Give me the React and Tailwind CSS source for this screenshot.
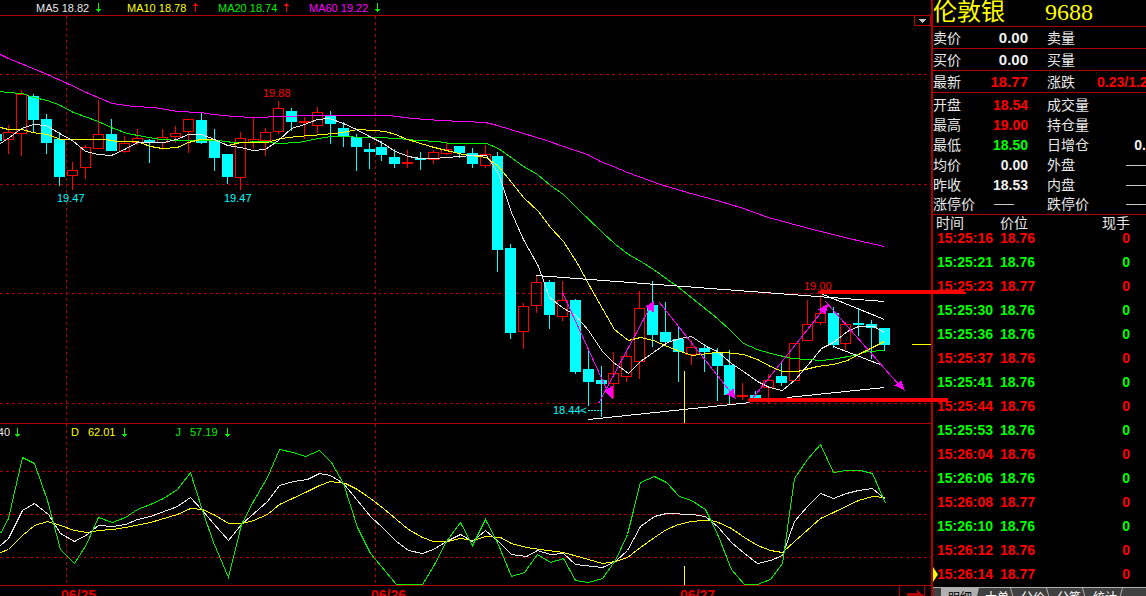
import React from "react";

const CHART_FONT = "font-['Liberation_Sans',sans-serif]";

// [center x, high, body top, body bottom, low, rising]
const CANDLES = [
  [-4, 134, 134, 141, 141, 0],
  [8, 125, 132, 139, 154, 1],
  [21, 90, 94, 133, 156, 1],
  [33, 94, 96, 120, 132, 0],
  [46, 114, 119, 143, 154, 0],
  [59, 132, 139, 177, 186, 0],
  [72, 162, 170, 175, 190, 1],
  [85, 145, 147, 167, 179, 1],
  [98, 100, 134, 148, 148, 1],
  [111, 119, 134, 151, 151, 0],
  [124, 136, 143, 151, 153, 1],
  [137, 129, 138, 142, 145, 1],
  [149, 139, 140, 143, 163, 0],
  [162, 129, 137, 142, 150, 1],
  [175, 126, 133, 136, 143, 1],
  [188, 119, 119, 131, 153, 1],
  [201, 113, 120, 143, 144, 0],
  [214, 129, 141, 158, 171, 0],
  [227, 154, 154, 177, 184, 0],
  [240, 132, 138, 177, 190, 1],
  [253, 117, 139, 142, 149, 1],
  [265, 128, 132, 140, 156, 1],
  [278, 101, 108, 131, 134, 1],
  [291, 108, 111, 122, 131, 0],
  [304, 117, 121, 122, 139, 1],
  [317, 107, 112, 125, 133, 1],
  [330, 111, 115, 124, 144, 0],
  [343, 122, 128, 137, 147, 0],
  [356, 134, 137, 147, 171, 0],
  [369, 143, 149, 152, 169, 0],
  [381, 141, 147, 155, 161, 0],
  [394, 149, 157, 164, 168, 0],
  [407, 150, 162, 163, 168, 1],
  [420, 152, 158, 160, 170, 0],
  [433, 150, 152, 159, 164, 1],
  [446, 143, 149, 153, 155, 1],
  [459, 146, 146, 153, 158, 0],
  [472, 148, 153, 164, 168, 0],
  [485, 145, 154, 165, 168, 1],
  [497, 152, 156, 250, 272, 0],
  [510, 244, 248, 333, 339, 0],
  [523, 303, 306, 331, 349, 1],
  [536, 276, 282, 305, 313, 1],
  [549, 280, 282, 315, 329, 0],
  [562, 281, 300, 316, 321, 1],
  [575, 299, 300, 372, 374, 0],
  [588, 349, 369, 382, 406, 0],
  [601, 366, 380, 384, 417, 0],
  [613, 352, 373, 383, 398, 1],
  [626, 350, 356, 376, 382, 1],
  [639, 291, 308, 361, 379, 1],
  [652, 281, 305, 335, 347, 0],
  [665, 302, 332, 342, 346, 0],
  [678, 326, 339, 352, 382, 0],
  [691, 340, 347, 354, 365, 1],
  [704, 344, 348, 352, 372, 0],
  [717, 348, 352, 366, 401, 0],
  [729, 350, 365, 395, 404, 0],
  [742, 383, 395, 396, 400, 1],
  [755, 391, 395, 398, 400, 0],
  [768, 374, 380, 387, 403, 1],
  [781, 361, 376, 383, 386, 0],
  [794, 343, 343, 380, 380, 1],
  [807, 300, 324, 340, 340, 1],
  [820, 295, 313, 322, 325, 1],
  [833, 307, 313, 345, 348, 0],
  [845, 322, 324, 343, 350, 1],
  [858, 308, 323, 325, 336, 0],
  [871, 320, 324, 328, 359, 0],
  [884, 328, 328, 345, 351, 0],
];

const MA5 =
  "0,143 9,137 21,128 33,124 46,125 59,133 72,140 85,151 98,154 111,155 124,149 137,142 150,142 163,142 176,139 188,134 201,134 214,139 227,145 240,147 253,150 265,149 278,140 291,128 304,124 317,119 329,118 343,123 356,129 369,136 381,142 395,151 408,156 420,158 433,158 446,157 459,156 472,155 486,155 498,173 511,212 523,239 538,266 549,297 562,307 575,315 588,330 602,351 613,362 628,373 640,361 653,352 667,342 680,338 691,336 706,346 717,351 731,363 743,371 757,381 769,387 782,390 795,379 808,364 821,348 833,342 847,331 858,326 873,326 884,332";
const MA10 =
  "0,127 8,129 22,129 32,132 47,134 60,139 105,139 117,141 137,141 150,146 162,148 177,147 188,142 200,139 213,139 228,145 240,142 267,142 280,138 297,136 323,134 342,132 357,129 373,130 385,131 395,134 407,139 430,146 450,151 463,154 486,157 498,166 512,183 523,197 538,211 550,227 563,241 577,263 590,287 602,308 614,329 628,340 640,337 653,340 667,346 680,351 692,355 700,354 715,352 725,352 743,354 757,359 770,366 782,371 797,371 817,366 833,364 847,360 860,353 884,341";
const MA20 =
  "0,91 7,92 22,93 33,97 47,100 60,105 73,112 87,117 100,122 113,128 127,133 143,136 160,139 180,140 217,140 233,142 267,141 277,143 298,142 313,139 330,136 377,137 397,138 417,140 437,141 450,143 470,143 486,143 498,148 512,158 523,166 537,174 550,185 563,194 577,208 602,232 615,244 628,254 642,262 653,269 667,279 677,286 692,298 717,318 730,330 743,343 757,349 770,353 792,358 807,359 822,360 837,358 853,355 867,351 884,350";
const MA60 =
  "0,54 8,58 35,69 47,74 67,83 88,93 112,103 133,106 153,107 177,111 200,112 213,114 233,116 253,117 283,116 310,115 362,115 388,115 413,118 440,120 463,121 485,122 497,125 510,129 546,140 563,146 587,154 600,161 613,166 627,172 660,184 687,192 720,201 740,207 768,217 790,223 820,231 857,240 884,246";

const K_LINE =
  "0,545 8,538 22,510 34,503 48,514 60,533 74,541 87,534 98,525 112,526 125,524 137,519 150,516 177,506 190,497 202,510 213,523 228,540 241,524 267,501 279,485 293,481 307,479 319,473 330,475 343,483 357,500 370,516 383,528 396,541 408,550 422,553 433,549 446,541 460,534 472,541 485,530 498,541 511,554 526,556 537,550 550,554 563,553 575,564 602,567 615,561 627,550 640,526 654,516 666,513 692,514 705,516 718,527 731,542 744,553 757,563 770,560 782,555 794,521 807,506 820,493 833,498 846,493 858,490 872,488 885,499";
const D_LINE =
  "0,552 8,549 22,535 34,525 47,521 60,525 74,530 87,532 98,530 112,529 125,527 150,522 177,514 190,508 202,509 215,515 228,523 242,523 253,520 267,514 279,504 305,492 319,485 330,481 345,483 357,489 370,498 383,508 396,519 408,529 422,537 433,541 447,541 460,538 473,540 485,536 500,537 511,543 526,547 540,549 563,552 588,559 602,563 615,561 627,557 640,547 654,537 666,529 678,524 691,521 703,520 711,520 718,522 731,528 744,537 757,545 770,550 782,552 794,541 820,518 833,512 858,500 872,496 885,497";
const J_LINE =
  "0,533 8,518 22,457 34,463 47,500 60,549 74,563 86,544 98,517 112,522 125,517 137,509 150,504 163,498 177,489 190,472 202,510 213,542 228,577 241,524 253,501 267,477 279,449 293,452 305,456 319,450 331,462 343,483 357,527 370,553 396,584 422,584 433,566 446,541 460,522 472,545 485,519 497,542 511,576 524,572 537,554 550,562 563,558 575,580 588,582 602,578 615,560 627,534 640,482 654,476 666,482 679,496 691,500 705,509 711,521 718,536 731,569 744,584 757,584 770,579 782,563 794,478 807,459 820,444 833,472 846,470 860,470 872,473 885,503";

const AVERAGES = [
  { text: "MA5 18.82", color: "text-[#e8e8e8]", up: false },
  { text: "MA10 18.78", color: "text-[#ffff00]", up: true },
  { text: "MA20 18.74", color: "text-[#00f000]", up: true },
  { text: "MA60 19.22", color: "text-[#ff00ff]", up: false },
];

const WHITE = "text-[#f0f0f0]";
const RED = "text-[#ff0000]";
const GREEN = "text-[#00ff00]";

const QUOTES = [
  ["卖价", "0.00", WHITE, "卖量", "", WHITE],
  ["买价", "0.00", WHITE, "买量", "", WHITE],
  ["最新", "18.77", RED, "涨跌", "0.23/1.2", RED],
];

const EMPTY = "——";

const DETAILS = [
  ["开盘", "18.54", RED, "成交量", ""],
  ["最高", "19.00", RED, "持仓量", ""],
  ["最低", "18.50", GREEN, "日增仓", "0."],
  ["均价", "0.00", WHITE, "外盘", EMPTY],
  ["昨收", "18.53", WHITE, "内盘", EMPTY],
  ["涨停价", EMPTY, WHITE, "跌停价", EMPTY],
];

const TICKS = [
  ["15:25:16", "18.76", RED],
  ["15:25:21", "18.76", GREEN],
  ["15:25:23", "18.77", RED],
  ["15:25:30", "18.76", GREEN],
  ["15:25:36", "18.76", GREEN],
  ["15:25:37", "18.76", RED],
  ["15:25:41", "18.76", GREEN],
  ["15:25:44", "18.76", RED],
  ["15:25:53", "18.76", GREEN],
  ["15:26:04", "18.76", RED],
  ["15:26:06", "18.76", GREEN],
  ["15:26:08", "18.77", RED],
  ["15:26:10", "18.76", GREEN],
  ["15:26:12", "18.76", RED],
  ["15:26:14", "18.77", RED],
];

const TABS = ["明细", "大单", "分价", "分笔", "统计"];

function Arrow({ up }) {
  return (
    <svg
      className={up ? "text-[#ff0000]" : "text-[#00f000]"}
      width="5"
      height="9"
      viewBox="0 0 5 9"
      fill="currentColor"
      shapeRendering="crispEdges"
      aria-hidden="true"
    >
      {up ? (
        <path d="M2 0h1v1h1v1h1v1h-2v6h-1v-6h-2v-1h1v-1h1z" />
      ) : (
        <path d="M2 0h1v6h2v1h-1v1h-1v1h-1v-1h-1v-1h-1v-1h2z" />
      )}
    </svg>
  );
}

function Curve({ points, color }) {
  return <polyline points={points} fill="none" stroke={color} />;
}

function Candle({ x, high, top, bottom, low, rising }) {
  if (!rising) {
    return (
      <g fill="#00ffff">
        <rect x={x} y={high} width="1" height={low - high} />
        <rect x={x - 5} y={top} width="11" height={bottom - top} />
      </g>
    );
  }
  return (
    <g fill="#ff0000">
      <rect x={x} y={high} width="1" height={top - high} />
      <rect x={x} y={bottom} width="1" height={low - bottom} />
      <path
        d={`M${x - 4.5} ${top + 0.5}h10v${bottom - top}h-10z`}
        fill="none"
        stroke="#ff0000"
      />
    </g>
  );
}

function PriceChart() {
  return (
    <svg
      className="relative z-10 block w-full overflow-visible"
      viewBox="0 16 931 407"
      shapeRendering="crispEdges"
      role="img"
      aria-label="K线图"
    >
      <g stroke="#b00000" strokeDasharray="3 3">
        {[74, 184, 293, 403].map((y) => (
          <path key={y} d={`M0 ${y + 0.5}H931`} />
        ))}
        {[66, 375].map((x) => (
          <path key={x} d={`M${x + 0.5} 16V423`} />
        ))}
      </g>
      {CANDLES.map(([x, high, top, bottom, low, rising]) => (
        <Candle key={x} x={x} high={high} top={top} bottom={bottom} low={low} rising={rising} />
      ))}
      <g transform="translate(0.5 0.5)">
        <Curve points={MA60} color="#ff00ff" />
        <Curve points={MA20} color="#00f000" />
        <Curve points={MA10} color="#ffff00" />
        <Curve points={MA5} color="#e8e8e8" />
        <path
          d="M536 275L884 301M588 419L750 402M787 397L884 387M820 293L884 319M833 346L882 365"
          stroke="#ffffff"
        />
        <path
          d="M562 292L608 393M598 403L650 306M659 302L732 394M748 403L823 309M825 301L899 385"
          stroke="#ff00ff"
        />
        <path
          d="M604 391L612 385V398ZM654 300L645 306L653 312ZM735 398L726 394L733 388ZM828 303L818 309L825 314ZM904 390L894 385L901 380Z"
          fill="#ff00ff"
        />
      </g>
      <path d="M684.5 371V423M912 344.5H931" stroke="#ffff00" />
      <path d="M588 410.5H601" stroke="#00ffff" strokeDasharray="2 1" />
      <path
        d="M818 291h2v-1h144v2h2v2h-146v-1h-2zM748 399h1v-1h199v3h-1v1h-198v-1h-1z"
        fill="#ff0000"
      />
      <g className={`${CHART_FONT} text-[11px]`} fill="#00ffff">
        <text x="57" y="202">19.47</text>
        <text x="224" y="202">19.47</text>
        <text x="553" y="414">18.44&lt;</text>
        <text x="263" y="97" fill="#ff0000">19.88</text>
        <text x="804" y="290" fill="#ff0000">19.00</text>
      </g>
    </svg>
  );
}

function OscillatorChart() {
  return (
    <svg
      className="block w-full"
      viewBox="0 424 931 161"
      shapeRendering="crispEdges"
      role="img"
      aria-label="KDJ"
    >
      <g stroke="#b00000" strokeDasharray="3 3">
        {[471, 514, 557].map((y) => (
          <path key={y} d={`M0 ${y + 0.5}H931`} />
        ))}
        {[66, 375].map((x) => (
          <path key={x} d={`M${x + 0.5} 424V583`} />
        ))}
      </g>
      <path d="M684.5 566V585" stroke="#ffff00" />
      <g transform="translate(0.5 0.5)">
        <Curve points={D_LINE} color="#ffff00" />
        <Curve points={K_LINE} color="#e8e8e8" />
        <Curve points={J_LINE} color="#00f000" />
      </g>
    </svg>
  );
}

function valueStyle(value, size) {
  return value === EMPTY ? "text-[10px]/4 font-normal" : `${size} font-bold`;
}

function QuoteRow({ cells, className, size }) {
  const [label, value, color, label2, value2, color2 = WHITE] = cells;
  return (
    <div className={`grid grid-cols-[52px_43px_69px_1fr] items-center whitespace-nowrap ${className}`}>
      <span>{label}</span>
      <span
        className={`text-right ${color} ${value === EMPTY ? "pr-3.5" : ""} ${valueStyle(value, size)}`}
      >
        {value}
      </span>
      <span className="pl-[19px]">{label2}</span>
      <span className={`text-right ${color2} ${valueStyle(value2, "text-sm/4")}`}>{value2}</span>
    </div>
  );
}

function Sidebar() {
  return (
    <aside className="flex w-[215px] shrink-0 flex-col overflow-hidden border-l-2 border-[#b00000] font-['Liberation_Sans','Noto_Sans_CJK_SC',sans-serif] text-sm/4 text-[#e8e8e8]">
      <h1 className="flex h-[27px] shrink-0 items-center gap-10 border-b border-[#b00000] pb-0.5 font-['Liberation_Serif','Noto_Sans_CJK_SC',serif] text-2xl/6 text-[#ffff00]">
        <span>伦敦银</span>
        <span>9688</span>
      </h1>
      {QUOTES.map((cells) => (
        <QuoteRow
          key={cells[0]}
          cells={cells}
          size="text-[15px]/4"
          className="h-[22px] shrink-0 border-b border-[#b00000]"
        />
      ))}
      <div className="shrink-0 border-b border-[#b00000] pt-0.5 pb-px">
        {DETAILS.map((cells) => (
          <QuoteRow key={cells[0]} cells={cells} size="text-sm/4" className="h-5 last:h-[18px]" />
        ))}
      </div>
      <div className="min-h-0 flex-1 overflow-hidden">
        <table className="w-full border-collapse">
          <thead>
            <tr className="h-4">
              <th className="w-[67px] p-0 pl-[3px] text-left font-normal">时间</th>
              <th className="p-0 text-left font-normal">价位</th>
              <th className="p-0 pr-4 text-right font-normal">现手</th>
            </tr>
          </thead>
          <tbody className="leading-[14px] font-bold">
            {TICKS.map(([time, price, color], i) => (
              <tr key={time} className={`h-6 align-top ${color}`}>
                <td className="relative p-0 pl-1">
                  {i === TICKS.length - 1 && (
                    <svg
                      className="absolute top-0 left-0"
                      width="5"
                      height="15"
                      viewBox="0 0 5 15"
                      aria-hidden="true"
                    >
                      <path d="M0 0L5 7.5L0 15Z" fill="#ffff00" />
                    </svg>
                  )}
                  {time}
                </td>
                <td className="p-0">{price}</td>
                <td className="p-0 pr-4 text-right">0</td>
              </tr>
            ))}
          </tbody>
        </table>
      </div>
      <nav className="flex h-[9px] shrink-0 overflow-hidden border-t border-[#b0b0b0] bg-[#404040] pl-2 text-xs/4">
        {TABS.map((tab, i) => (
          <button
            key={tab}
            type="button"
            className={`relative h-5 w-9 shrink-0 first:w-[38px] ${
              i === 0 ? "bg-[#b0b0b0] text-black" : "text-white"
            }`}
          >
            {tab}
            <svg
              className="absolute top-0 right-0"
              width="5"
              height="20"
              viewBox="0 0 5 20"
              aria-hidden="true"
            >
              {i === 0 ? (
                <path d="M5 0V20H0Z" fill="#404040" />
              ) : (
                <path
                  d={i === TABS.length - 1 ? "M4.500 0L0.500 14" : "M0.500 0L4.500 14"}
                  stroke="#b0b0b0"
                />
              )}
            </svg>
          </button>
        ))}
      </nav>
    </aside>
  );
}

export default function App() {
  return (
    <main className="flex h-screen overflow-hidden bg-black">
      <section className="relative min-w-0 flex-1">
        <header
          className={`grid h-4 grid-cols-[91px_91px_91px_1fr] border-b border-[#b00000] pl-9 ${CHART_FONT} text-[11px]/[14px]`}
        >
          {AVERAGES.map(({ text, color, up }) => (
            <span key={text} className="flex items-center gap-[7px] whitespace-nowrap">
              <span className={color}>{text}</span>
              <Arrow up={up} />
            </span>
          ))}
        </header>
        <button
          type="button"
          aria-label="展开"
          className="absolute top-[15px] right-0 z-10 flex h-[11px] w-[17px] items-center justify-center border border-[#b00000] bg-black"
        >
          <svg width="7" height="4" viewBox="0 0 7 4" shapeRendering="crispEdges" aria-hidden="true">
            <path d="M0 0h7v1h-1v1h-1v1h-1v1h-1v-1h-1v-1h-1v-1h-1z" fill="#c8c8c8" />
          </svg>
        </button>
        <div className="border-b border-[#b00000]">
          <PriceChart />
        </div>
        <div className="relative border-b border-[#b00000]">
          <OscillatorChart />
          <div
            className={`absolute top-0 left-0 flex h-4 w-full items-center ${CHART_FONT} text-[11px]/4 text-[#e8e8e8]`}
          >
            <span className="flex w-[15px] justify-end overflow-hidden pr-[5px]">60.40</span>
            <Arrow />
            <span className="ml-[51px] flex items-center gap-[7px] text-[#ffff00]">
              <span className="mr-0.5">D</span>
              <span>62.01</span>
              <Arrow />
            </span>
            <span className="ml-12 flex items-center gap-[7px] text-[#00f000]">
              <span className="mr-0.5">J</span>
              <span>57.19</span>
              <Arrow />
            </span>
          </div>
        </div>
        <div className="flex h-4 items-start justify-between pl-[61px] font-['Liberation_Sans',sans-serif] text-sm/[18px] font-bold text-[#e00000]">
          <div className="grid grid-cols-[310px_309px_60px]">
            <time>06/25</time>
            <time>06/26</time>
            <time>06/27</time>
          </div>
          <button
            type="button"
            aria-label="下一页"
            className="mr-1.5 h-4 w-[26px] border-x border-[#b00000] pl-[7px]"
          >
            <svg width="17" height="16" viewBox="0 0 17 16" shapeRendering="crispEdges" aria-hidden="true">
              <path d="M0 7H10V4L17 9.500L10 15V12H0Z" fill="#b00000" />
            </svg>
          </button>
        </div>
      </section>
      <Sidebar />
    </main>
  );
}
